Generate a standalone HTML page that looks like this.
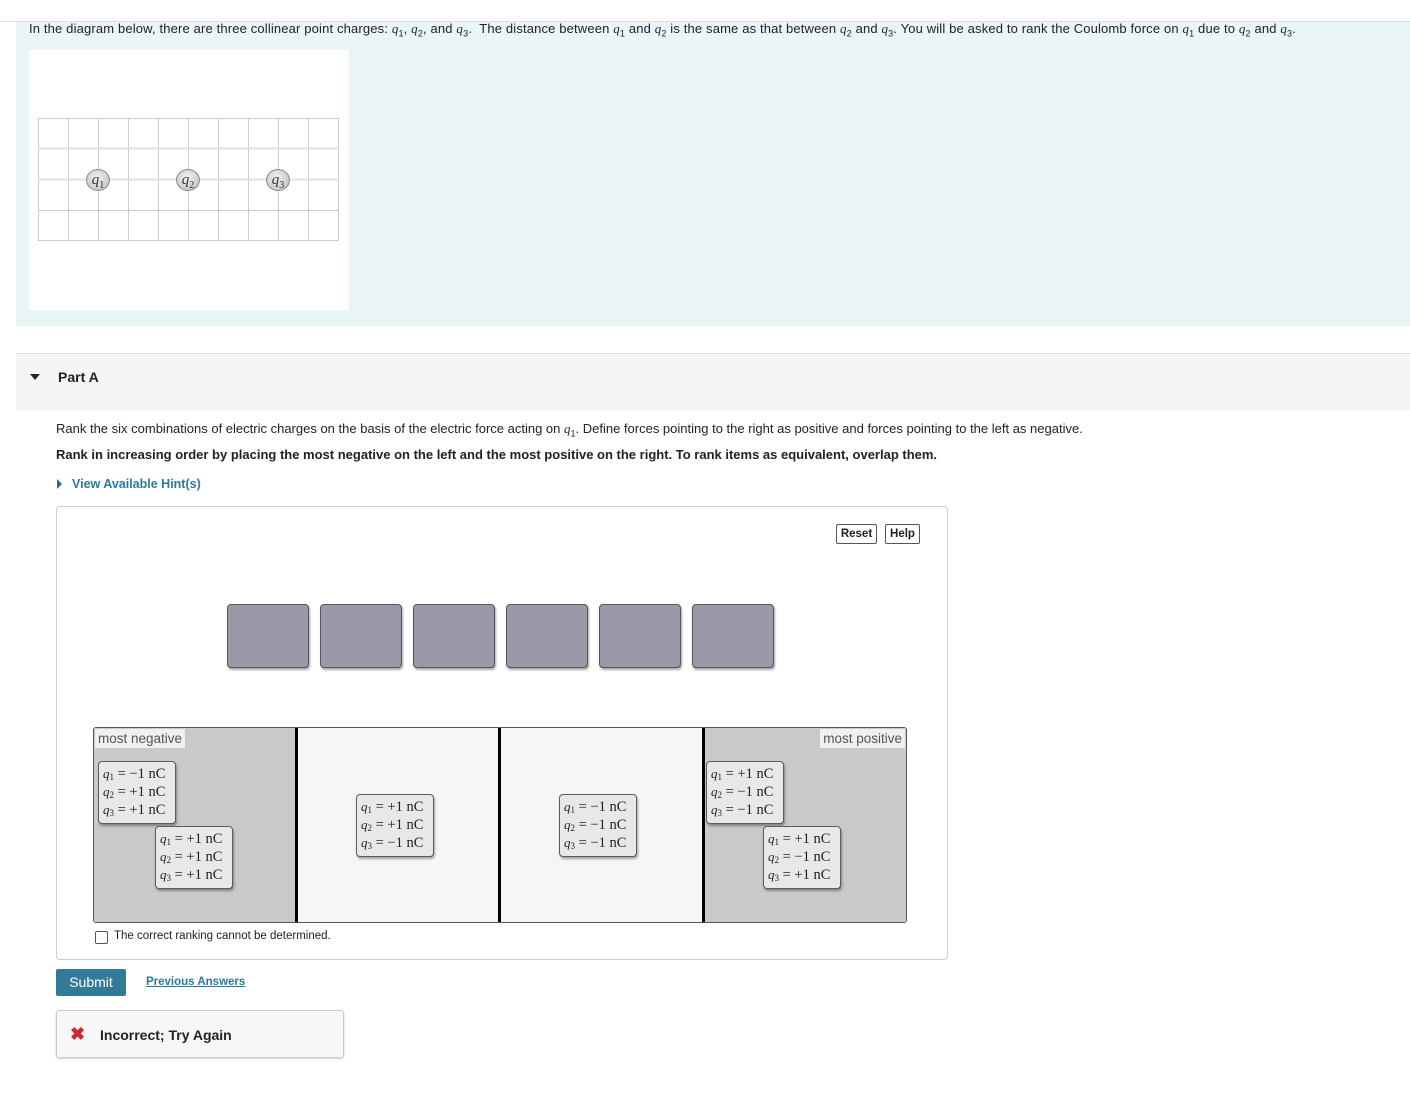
<!DOCTYPE html>
<html><head><meta charset="utf-8"><style>
body{margin:0;width:1410px;height:1094px;position:relative;background:#fff;font-family:"Liberation Sans",sans-serif;color:#222;overflow:hidden}
.a{position:absolute}
.q{font-family:"Liberation Serif",serif;font-style:italic}
sub{line-height:0}
.card{position:absolute;width:78px;height:63px;background:#e8e8e8;border:1.5px solid #5a5a6a;border-radius:4px;box-shadow:1px 2px 2px rgba(0,0,0,.35);font-family:"Liberation Serif",serif;font-size:14.5px;line-height:18px;padding:3px 0 0 4px;box-sizing:border-box;white-space:nowrap;color:#222}
.card i{font-size:13px}
.card sub{font-size:9px;vertical-align:-2px;font-style:normal;line-height:0}
.slot{position:absolute;top:604px;width:82px;height:64px;background:#9a99a8;border:1.5px solid #555;border-radius:4px;box-sizing:border-box;box-shadow:1px 2px 2px rgba(0,0,0,.35)}
.btn{position:absolute;top:524px;height:20px;border:1px solid #555;border-radius:2px;font-size:11.5px;font-weight:bold;line-height:19px;text-align:center;box-sizing:border-box;background:#fff}
.circ{position:absolute;width:24px;height:22px;border-radius:50%;background:radial-gradient(circle at 45% 40%,#f4f4f4,#b8b8b8);border:1px solid #888;box-sizing:border-box;font-family:"Liberation Serif",serif;font-style:italic;font-size:15px;line-height:20px;text-align:center;color:#333}
.circ sub{font-size:10px;font-style:normal}
</style></head><body>
<div class="a" style="left:0;top:21px;width:1410px;height:1px;background:#ddd"></div>
<div class="a" style="left:16px;top:22px;width:1394px;height:304px;background:#e9f5f7"></div>
<div class="a" style="left:29px;top:21px;font-size:13px;line-height:16px;white-space:nowrap;letter-spacing:0.15px">In the diagram below, there are three collinear point charges: <span class="q">q</span><sub style="font-size:9px">1</sub>, <span class="q">q</span><sub style="font-size:9px">2</sub>, and <span class="q">q</span><sub style="font-size:9px">3</sub>.&nbsp; The distance between <span class="q">q</span><sub style="font-size:9px">1</sub> and <span class="q">q</span><sub style="font-size:9px">2</sub> is the same as that between <span class="q">q</span><sub style="font-size:9px">2</sub> and <span class="q">q</span><sub style="font-size:9px">3</sub>. You will be asked to rank the Coulomb force on <span class="q">q</span><sub style="font-size:9px">1</sub> due to <span class="q">q</span><sub style="font-size:9px">2</sub> and <span class="q">q</span><sub style="font-size:9px">3</sub>.</div>
<div class="a" style="left:29px;top:50px;width:320px;height:260px;background:#fff"></div>
<svg class="a" style="left:38px;top:118px" width="302" height="124">
<g stroke="#ccc" stroke-width="1">
<line x1="0.5" y1="0" x2="0.5" y2="123"/><line x1="30.5" y1="0" x2="30.5" y2="123"/><line x1="60.5" y1="0" x2="60.5" y2="123"/><line x1="90.5" y1="0" x2="90.5" y2="123"/><line x1="120.5" y1="0" x2="120.5" y2="123"/><line x1="150.5" y1="0" x2="150.5" y2="123"/><line x1="180.5" y1="0" x2="180.5" y2="123"/><line x1="210.5" y1="0" x2="210.5" y2="123"/><line x1="240.5" y1="0" x2="240.5" y2="123"/><line x1="270.5" y1="0" x2="270.5" y2="123"/><line x1="300.5" y1="0" x2="300.5" y2="123"/>
<line x1="0" y1="0.5" x2="301" y2="0.5"/><line x1="0" y1="30.5" x2="301" y2="30.5" stroke="#e2e2e2" stroke-width="2"/><line x1="0" y1="61.5" x2="301" y2="61.5" stroke="#e2e2e2" stroke-width="2"/><line x1="0" y1="92.5" x2="301" y2="92.5"/><line x1="0" y1="122.5" x2="301" y2="122.5"/>
</g></svg>
<div class="circ" style="left:86px;top:169px">q<sub>1</sub></div>
<div class="circ" style="left:176px;top:169px">q<sub>2</sub></div>
<div class="circ" style="left:266px;top:169px">q<sub>3</sub></div>

<div class="a" style="left:16px;top:353px;width:1394px;height:57px;background:#f5f5f5;border-top:1px solid #ddd"></div>
<div class="a" style="left:30px;top:374px;width:0;height:0;border-left:5px solid transparent;border-right:5px solid transparent;border-top:6px solid #222"></div>
<div class="a" style="left:58px;top:369px;font-size:14px;font-weight:bold">Part A</div>
<div class="a" style="left:56px;top:421px;font-size:13px;white-space:nowrap;line-height:16px">Rank the six combinations of electric charges on the basis of the electric force acting on <span class="q">q</span><sub style="font-size:9px">1</sub>. Define forces pointing to the right as positive and forces pointing to the left as negative.</div>
<div class="a" style="left:56px;top:447px;font-size:13px;font-weight:bold;white-space:nowrap">Rank in increasing order by placing the most negative on the left and the most positive on the right. To rank items as equivalent, overlap them.</div>
<div class="a" style="left:57px;top:479px;width:0;height:0;border-top:5px solid transparent;border-bottom:5px solid transparent;border-left:5px solid #1f6f95"></div>
<div class="a" style="left:72px;top:477px;font-size:12.5px;font-weight:bold;color:#2a7aa0">View Available Hint(s)</div>

<div class="a" style="left:56px;top:506px;width:892px;height:454px;border:1px solid #ccc;border-radius:4px;box-sizing:border-box"></div>
<div class="btn" style="left:836px;width:41px">Reset</div>
<div class="btn" style="left:885px;width:35px">Help</div>
<div class="slot" style="left:227px"></div><div class="slot" style="left:320px"></div><div class="slot" style="left:413px"></div><div class="slot" style="left:506px"></div><div class="slot" style="left:599px"></div><div class="slot" style="left:692px"></div>

<div class="a" style="left:93px;top:727px;width:814px;height:196px;border:1.5px solid #555;border-radius:3px;box-sizing:border-box;background:#f6f6f6;overflow:hidden">
<div class="a" style="left:0;top:0;width:202px;height:196px;background:#c9c9c9"></div>
<div class="a" style="left:609px;top:0;width:205px;height:196px;background:#c9c9c9"></div>
<div class="a" style="left:201px;top:0;width:3px;height:196px;background:#000"></div>
<div class="a" style="left:404px;top:0;width:3px;height:196px;background:#000"></div>
<div class="a" style="left:608px;top:0;width:3px;height:196px;background:#000"></div>
<div class="a" style="left:1px;top:1px;background:#f0f0f0;color:#555;font-size:13.5px;padding:1px 3px;line-height:17px">most negative</div>
<div class="a" style="right:1px;top:1px;background:#f0f0f0;color:#555;font-size:13.5px;padding:1px 3px;line-height:17px">most positive</div>
</div>
<div class="card" style="left:98px;top:761px"><i>q</i><sub>1</sub> = −1 nC<br><i>q</i><sub>2</sub> = +1 nC<br><i>q</i><sub>3</sub> = +1 nC</div>
<div class="card" style="left:155px;top:826px"><i>q</i><sub>1</sub> = +1 nC<br><i>q</i><sub>2</sub> = +1 nC<br><i>q</i><sub>3</sub> = +1 nC</div>
<div class="card" style="left:356px;top:794px"><i>q</i><sub>1</sub> = +1 nC<br><i>q</i><sub>2</sub> = +1 nC<br><i>q</i><sub>3</sub> = −1 nC</div>
<div class="card" style="left:559px;top:794px"><i>q</i><sub>1</sub> = −1 nC<br><i>q</i><sub>2</sub> = −1 nC<br><i>q</i><sub>3</sub> = −1 nC</div>
<div class="card" style="left:706px;top:761px"><i>q</i><sub>1</sub> = +1 nC<br><i>q</i><sub>2</sub> = −1 nC<br><i>q</i><sub>3</sub> = −1 nC</div>
<div class="card" style="left:763px;top:826px"><i>q</i><sub>1</sub> = +1 nC<br><i>q</i><sub>2</sub> = −1 nC<br><i>q</i><sub>3</sub> = +1 nC</div>

<div class="a" style="left:95px;top:931px;width:11px;height:11px;border:1px solid #555;border-radius:2px;background:#fff"></div>
<div class="a" style="left:114px;top:930px;font-size:11.5px">The correct ranking cannot be determined.</div>

<div class="a" style="left:56px;top:969px;width:70px;height:27px;background:#337a99;border-radius:2px;color:#fff;font-size:14px;line-height:27px;text-align:center">Submit</div>
<div class="a" style="left:146px;top:976px;font-size:11.5px;font-weight:bold;color:#2a7aa0;text-decoration:underline">Previous Answers</div>
<div class="a" style="left:56px;top:1010px;width:288px;height:48px;border:1px solid #ccc;border-radius:3px;box-sizing:border-box;background:#f7f7f7;box-shadow:0 1px 2px rgba(0,0,0,.2)"></div>
<div class="a" style="left:70px;top:1024px;font-size:18px;font-weight:bold;color:#d0262d;line-height:20px">✖</div>
<div class="a" style="left:100px;top:1027px;font-size:14px;font-weight:bold">Incorrect; Try Again</div>
</body></html>
